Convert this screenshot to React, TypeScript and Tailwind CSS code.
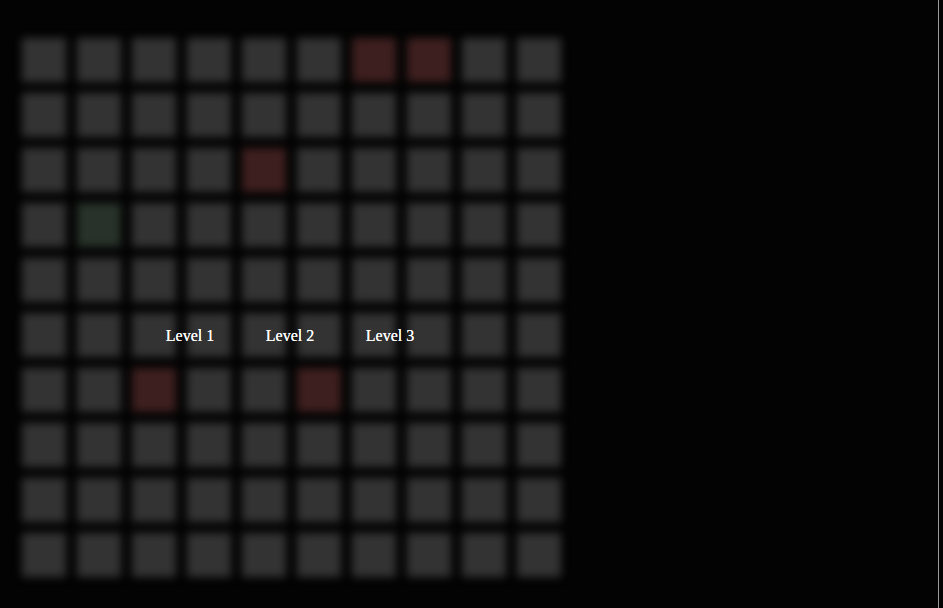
import React from 'react';

const RED = new Set(['0-6', '0-7', '2-4', '6-2', '6-5']);
const GREEN = new Set(['3-1']);

export default function App() {
  const rows = Array.from({ length: 10 }, (_, r) => r);
  const cols = Array.from({ length: 10 }, (_, c) => c);

  return (
    <div className="flex w-full h-[608px] bg-[#030303] overflow-hidden">
      <div className="w-[939px] shrink-0 border-r border-[#9a9a9a]">
        <div className="relative w-[583px] pt-[38px] pl-[22px]">
          {/* Blurred board */}
          <div className="grid grid-cols-[repeat(10,44px)] gap-[11px] blur-[4px]">
            {rows.map((r) =>
              cols.map((c) => {
                const key = `${r}-${c}`;
                const color = RED.has(key)
                  ? 'bg-[#3e1f1f]'
                  : GREEN.has(key)
                  ? 'bg-[#28322a]'
                  : 'bg-[#333333]';
                return <div key={key} className={`w-[44px] h-[44px] ${color}`} />;
              })
            )}
          </div>

          {/* Level menu */}
          <div className="absolute left-[140px] top-[325px] flex">
            {['Level 1', 'Level 2', 'Level 3'].map((label) => (
              <div
                key={label}
                className="w-[100px] text-center text-white text-[16px] leading-[22px] font-['Liberation_Serif',serif] [text-shadow:0_0_0.4px_#fff]"
              >
                {label}
              </div>
            ))}
          </div>
        </div>
      </div>
    </div>
  );
}
